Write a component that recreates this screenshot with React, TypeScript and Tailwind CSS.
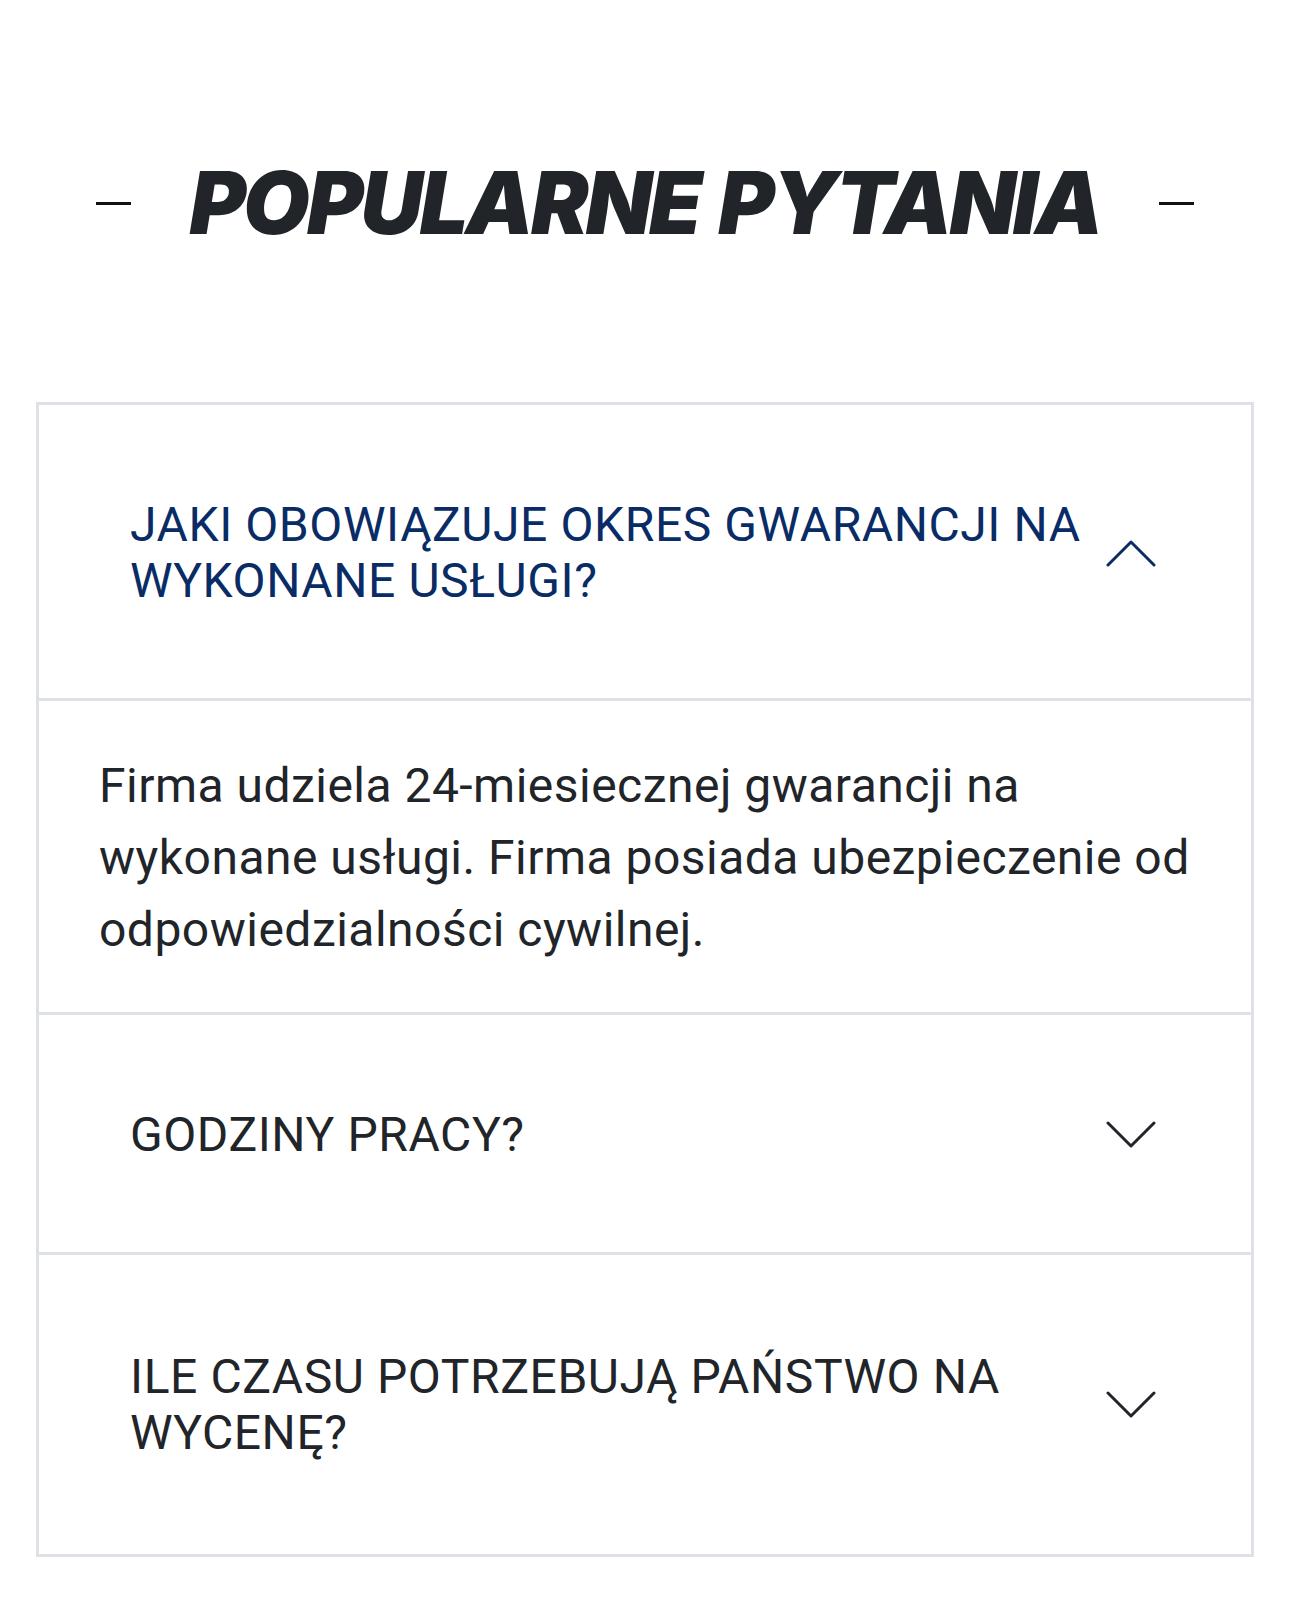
import React, { useState } from "react";

type Item = { q: string; a?: string };

const items: Item[] = [
  {
    q: "JAKI OBOWIĄZUJE OKRES GWARANCJI NA WYKONANE USŁUGI?",
    a: "Firma udziela 24-miesiecznej gwarancji na wykonane usługi. Firma posiada ubezpieczenie od odpowiedzialności cywilnej.",
  },
  { q: "GODZINY PRACY?", a: "" },
  { q: "ILE CZASU POTRZEBUJĄ PAŃSTWO NA WYCENĘ?", a: "" },
];

function Chevron({ up, color }: { up: boolean; color: string }) {
  return (
    <svg width="50" height="28" viewBox="0 0 50 28" fill="none" className="shrink-0">
      {up ? (
        <polyline points="2,26 25,3 48,26" stroke={color} strokeWidth="3" strokeLinecap="round" strokeLinejoin="round" />
      ) : (
        <polyline points="2,2 25,25 48,2" stroke={color} strokeWidth="3" strokeLinecap="round" strokeLinejoin="round" />
      )}
    </svg>
  );
}

export default function App() {
  const [open, setOpen] = useState<number>(0);
  return (
    <div className="min-h-[1603px] bg-white" style={{ fontFamily: "Roboto, 'Liberation Sans', sans-serif" }}>
      <div className="flex items-center justify-between px-[96px] pt-[160px]">
        <span className="block h-[3px] w-[35px] bg-[#111]" />
        <h2
          className="m-0 text-[86px] leading-none font-black italic tracking-[-0.033em] text-[#212529]"
          style={{ fontFamily: "Inter, 'Liberation Sans', sans-serif", wordSpacing: "0.05em" }}
        >
          POPULARNE PYTANIA
        </h2>
        <span className="block h-[3px] w-[35px] bg-[#111]" />
      </div>

      <div className="mx-[36px] mt-[156px] border-[3px] border-[#dee2e6]">
        {items.map((it, i) => {
          const isOpen = open === i;
          const last = i === items.length - 1;
          return (
            <div key={i} className={i > 0 ? "border-t-[3px] border-[#dee2e6]" : ""}>
              <button
                type="button"
                onClick={() => setOpen(isOpen ? -1 : i)}
                className={`flex w-full items-center gap-[16px] pl-[91px] pr-[95px] text-left ${last ? "pt-[94px] pb-[93px]" : "pt-[92px] pb-[89px]"}`}
              >
                <span
                  className={`flex-1 text-[48px] leading-[56px] font-normal tracking-[0.012em] ${isOpen ? "text-[#0a2c66]" : "text-[#212529]"}`}
                >
                  {it.q}
                </span>
                <Chevron up={isOpen} color={isOpen ? "#0a2c66" : "#212529"} />
              </button>
              {isOpen && it.a ? (
                <div className="border-t-[3px] border-[#dee2e6] px-[60px] pt-[49px] pb-[46px] text-[48px] leading-[72px] tracking-[0.01em] text-[#212529]">
                  {it.a}
                </div>
              ) : null}
            </div>
          );
        })}
      </div>
    </div>
  );
}
